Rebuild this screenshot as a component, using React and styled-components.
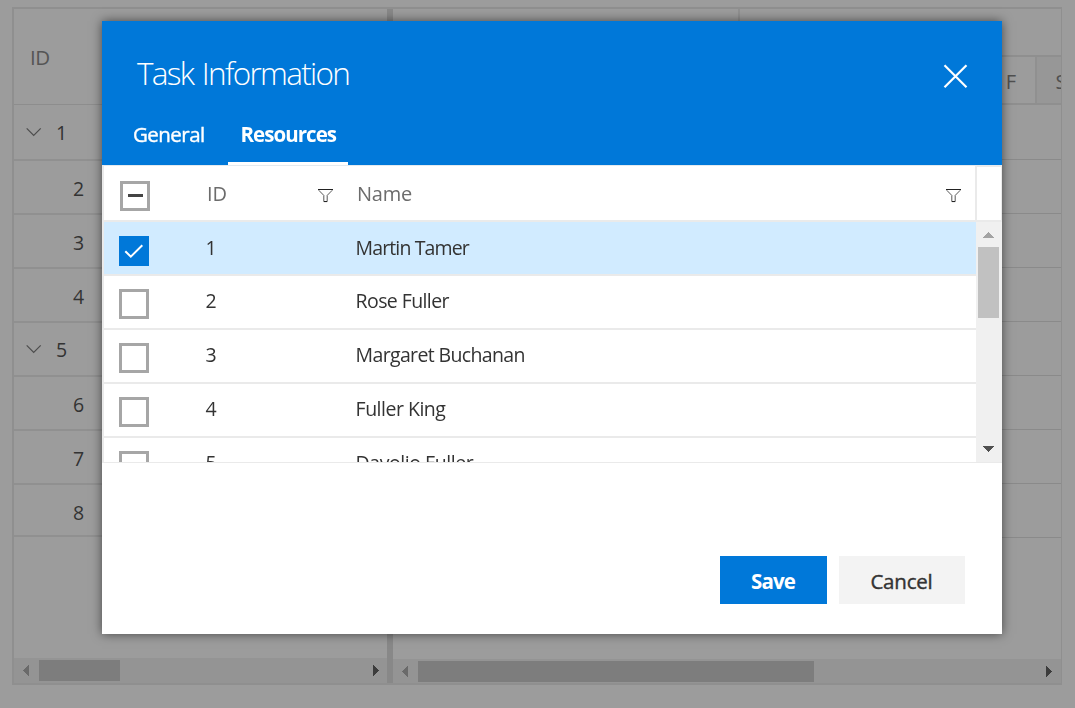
import React from "react";
import styled, { createGlobalStyle } from "styled-components";

const Global = createGlobalStyle`
  * { box-sizing: border-box; }
  body {
    margin: 0;
    background: #9c9c9c;
    font-family: "Segoe UI", "Open Sans", "Noto Sans", sans-serif;
    font-size: 19.5px;
    color: #333;
    overflow: hidden;
  }
`;

const Page = styled.div`
  width: 1075px;
  height: 708px;
  padding: 7px 13px 23px 12px;
  overflow: hidden;
`;

const Gantt = styled.div`
  display: flex;
  height: 678px;
  border: 2px solid #8f8f8f;
  border-right-width: 1px;
`;

const TreePane = styled.div`
  display: flex;
  flex-direction: column;
  width: 373px;
`;

const Splitter = styled.div`
  width: 6px;
  background: #888;
`;

const ChartPane = styled.div`
  display: flex;
  flex-direction: column;
  flex: 1;
  min-width: 0;
`;

const TreeHeader = styled.div`
  height: 96px;
  padding: 33px 0 0 16px;
  line-height: 30px;
  font-size: 20.5px;
  letter-spacing: -0.4px;
  color: #555;
  border-bottom: 1px solid #8d8d8d;
`;

const TreeRow = styled.div`
  display: flex;
  height: ${(p) => p.$height}px;
  padding: ${(p) => p.$top}px 0 0 ${(p) => (p.$parent ? 12 : 59)}px;
  line-height: 30px;
  border-bottom: 2px solid #909090;
`;

const Chevron = styled.svg`
  width: 16px;
  height: 10px;
  margin: 9px 14px 0 0;
  fill: none;
  stroke: #4d4d4d;
  stroke-width: 1.2;
`;

const Spacer = styled.div`
  flex: 1;
`;

const HScroll = styled.div`
  display: flex;
  align-items: flex-start;
  height: ${(p) => p.$height}px;
  padding: 2px ${(p) => p.$right}px 0 9px;
  background: #949494;
`;

const HThumb = styled.div`
  width: ${(p) => p.$width}px;
  height: 21px;
  margin-left: 10px;
  background: #7d7d7d;
`;

const Arrow = styled.svg`
  flex: none;
  width: ${(p) => p.$w}px;
  height: ${(p) => p.$h}px;
  margin-top: ${(p) => p.$mt || 0}px;
  fill: ${(p) => p.$color};
  shape-rendering: crispEdges;
`;

const WeekRow = styled.div`
  display: flex;
  height: 48px;
  border-bottom: 2px solid #8f8f8f;
`;

const Week = styled.div`
  width: ${(p) => p.$width}px;
  border-right: 2px solid #909090;
`;

const DayRow = styled.div`
  display: flex;
  height: 48px;
  padding-left: 294px;
  border-bottom: 2px solid #8f8f8f;
  overflow: hidden;
`;

const Day = styled.div`
  flex: none;
  width: 50px;
  border-right: 2px solid #909090;
  background: ${(p) => (p.$weekend ? "#979797" : "transparent")};
  text-align: center;
  line-height: 49px;
  font-size: 20px;
  color: #505050;
`;

const ChartRow = styled.div`
  height: ${(p) => p.$height}px;
  border-bottom: 1px solid #8a8a8a;
`;

const Overlay = styled.div`
  position: fixed;
  inset: 0;
  padding: 21px 0 0 102px;
`;

const Dialog = styled.div`
  display: flex;
  flex-direction: column;
  width: 900px;
  height: 613px;
  background: #fff;
  box-shadow: 0 0 10px rgba(0, 0, 0, 0.55);
`;

const DialogHeader = styled.header`
  display: flex;
  flex-direction: column;
  justify-content: space-between;
  height: 144px;
  background: #0078d9;
  color: #fff;
`;

const TitleBar = styled.div`
  display: flex;
  justify-content: space-between;
  padding: 30px 34px 0 35px;
`;

const Title = styled.h1`
  margin: 0;
  font-size: 31.5px;
  font-weight: 300;
  line-height: 44px;
  letter-spacing: -1.7px;
  word-spacing: 2px;
`;

const CloseIcon = styled.svg`
  width: 25px;
  height: 25px;
  margin-top: 13px;
  stroke: #fff;
  stroke-width: 2.2;
`;

const Tabs = styled.nav`
  display: flex;
  padding-left: 20px;
`;

const Tab = styled.div`
  width: ${(p) => (p.$active ? 120 : 106)}px;
  height: 49px;
  padding: 2px 0 0 ${(p) => (p.$active ? 12.5 : 11)}px;
  line-height: 32px;
  font-size: 20.5px;
  font-weight: ${(p) => (p.$active ? 700 : 400)};
  letter-spacing: ${(p) => (p.$active ? -0.95 : -0.55)}px;
  -webkit-text-stroke: ${(p) => (p.$active ? 0 : 0.4)}px currentColor;
  border-bottom: 3px solid ${(p) => (p.$active ? "#fff" : "transparent")};
`;

const Grid = styled.section`
  display: flex;
  flex-direction: column;
  height: 298px;
  border-left: 2px solid #eaeaea;
  border-bottom: 1px solid #eaeaea;
`;

const GridHeader = styled.div`
  display: flex;
  height: 57px;
  border-top: 1px solid #e4eaef;
  border-bottom: 2px solid #eaeaea;
  font-size: 20px;
  color: #6c6c6c;
`;

const CheckHead = styled.div`
  width: 103px;
  padding: 15px 0 0 16px;
`;

const ColumnHead = styled.div`
  display: flex;
  justify-content: space-between;
  width: ${(p) => p.$width}px;
  padding: 14px ${(p) => p.$right}px 0 0;
  line-height: 28px;
  letter-spacing: ${(p) => p.$spacing}px;
`;

const HeadText = styled.span`
  margin-left: ${(p) => p.$shift || 0}px;
`;

const HeadGutter = styled.div`
  flex: 1;
  border: solid #eaeaea;
  border-width: 1px 1px 0 2px;
`;

const FilterIcon = styled.svg`
  width: 15px;
  height: 14px;
  margin-top: 9px;
  fill: none;
  stroke: #444;
  stroke-width: 1;
`;

const GridBody = styled.div`
  display: flex;
  height: 240px;
`;

const Rows = styled.div`
  width: 872px;
  overflow: hidden;
`;

const Row = styled.div`
  display: flex;
  height: 54px;
  padding: ${(p) => (p.$selected ? 14 : 13)}px 0 0 15px;
  background: ${(p) => (p.$selected ? "#d1ebff" : "#fff")};
  border-bottom: 2px solid #eaeaea;
  line-height: 24px;
`;

const CheckBox = styled.span`
  display: flex;
  flex: none;
  align-items: center;
  justify-content: center;
  width: 30px;
  height: 30px;
  background: ${(p) => (p.$checked ? "#0078d9" : "#fff")};
  border: 3px solid ${(p) => (p.$checked ? "#0078d9" : "#a6a6a6")};
`;

const Dash = styled.span`
  width: 15px;
  height: 3px;
  margin-bottom: 1px;
  background: #444;
`;

const Tick = styled.svg`
  flex: none;
  width: 20px;
  height: 16px;
  fill: none;
  stroke: #fff;
  stroke-width: 2;
`;

const IdCell = styled.span`
  width: 150px;
  margin-left: 56.6px;
`;

const NameCell = styled.span`
  letter-spacing: ${(p) => p.$spacing}px;
`;

const VScroll = styled.div`
  display: flex;
  flex-direction: column;
  align-items: center;
  flex: 1;
  padding: 10px 1px 10px 0;
  background: #f0f0f0;
`;

const VThumb = styled.div`
  width: 21px;
  height: 71px;
  margin-top: 9px;
  background: #c1c1c1;
`;

const Footer = styled.footer`
  display: flex;
  justify-content: flex-end;
  gap: 12px;
  padding: 93px 37px 0 0;
`;

const Button = styled.button`
  width: ${(p) => (p.$primary ? 107 : 126)}px;
  height: 48px;
  padding: 1px 1px 0 0;
  border: 0;
  font-family: inherit;
  font-size: 20.5px;
  line-height: 30px;
  font-weight: ${(p) => (p.$primary ? 700 : 400)};
  letter-spacing: ${(p) => (p.$primary ? -0.9 : -0.2)}px;
  -webkit-text-stroke: ${(p) => (p.$primary ? 0 : 0.4)}px currentColor;
  color: ${(p) => (p.$primary ? "#fff" : "#333")};
  background: ${(p) => (p.$primary ? "#0078d9" : "#f3f3f3")};
`;

const tasks = [
  { id: 1, parent: true, height: 56, top: 13 },
  { id: 2, height: 54, top: 13 },
  { id: 3, height: 54, top: 13 },
  { id: 4, height: 54, top: 13 },
  { id: 5, parent: true, height: 54, top: 12 },
  { id: 6, height: 54, top: 13 },
  { id: 7, height: 54, top: 13 },
  { id: 8, height: 52, top: 13 },
];

const resources = [
  { id: 1, name: "Martin Tamer", selected: true, spacing: -0.88 },
  { id: 2, name: "Rose Fuller", spacing: -0.6 },
  { id: 3, name: "Margaret Buchanan", spacing: -0.65 },
  { id: 4, name: "Fuller King", spacing: -0.5 },
  { id: 5, name: "Davolio Fuller", spacing: -0.45 },
];

const arrows = {
  left: "M6 0V11L0 5.5Z",
  right: "M0 0V11L6 5.5Z",
  up: "M0 6H11L5.5 0Z",
  down: "M0 0H11L5.5 6Z",
};

function ScrollArrow({ dir, color, mt }) {
  const side = dir === "left" || dir === "right";
  return (
    <Arrow $w={side ? 6 : 11} $h={side ? 11 : 6} $mt={mt} $color={color}>
      <path d={arrows[dir]} />
    </Arrow>
  );
}

function Filter() {
  return (
    <FilterIcon viewBox="0 0 15 14">
      <path d="M0.7 1.2L5.8 6.4V12.6H9.2V6.4L14.3 1.2" strokeWidth="0.9" />
      <path d="M0 0.5H15M6 12.5H9" stroke="#222" />
    </FilterIcon>
  );
}

export default function App() {
  return (
    <>
      <Global />
      <Page>
        <Gantt>
          <TreePane>
            <TreeHeader>ID</TreeHeader>
            {tasks.map((t) => (
              <TreeRow key={t.id} $height={t.height} $top={t.top} $parent={t.parent}>
                {t.parent && (
                  <Chevron viewBox="0 0 16 10">
                    <path d="M0.7 1.3L7.7 8.4L14.7 1.3" />
                  </Chevron>
                )}
                {t.id}
              </TreeRow>
            ))}
            <Spacer />
            <HScroll $height={25} $right={8}>
              <ScrollArrow dir="left" color="#6a6a6a" mt={5} />
              <HThumb $width={81} />
              <Spacer />
              <ScrollArrow dir="right" color="#3c3c3c" mt={5} />
            </HScroll>
          </TreePane>
          <Splitter />
          <ChartPane>
            <WeekRow>
              <Week $width={347} />
            </WeekRow>
            <DayRow>
              <Day />
              <Day />
              <Day />
              <Day />
              <Day />
              <Day />
              <Day>F</Day>
              <Day $weekend>S</Day>
            </DayRow>
            {tasks.map((t) => (
              <ChartRow key={t.id} $height={t.id === 1 ? 55 : 54} />
            ))}
            <Spacer />
            <HScroll $height={24} $right={9}>
              <ScrollArrow dir="left" color="#6a6a6a" mt={5} />
              <HThumb $width={396} />
              <Spacer />
              <ScrollArrow dir="right" color="#3c3c3c" mt={5} />
            </HScroll>
          </ChartPane>
        </Gantt>
      </Page>

      <Overlay>
        <Dialog>
          <DialogHeader>
            <TitleBar>
              <Title>Task Information</Title>
              <CloseIcon viewBox="0 0 25 25">
                <path d="M1.5 1.2L23.5 23.2M23.5 1.2L1.5 23.2" />
              </CloseIcon>
            </TitleBar>
            <Tabs>
              <Tab>General</Tab>
              <Tab $active>Resources</Tab>
            </Tabs>
          </DialogHeader>

          <Grid>
            <GridHeader>
              <CheckHead>
                <CheckBox>
                  <Dash />
                </CheckBox>
              </CheckHead>
              <ColumnHead $width={151} $right={25} $spacing={-0.2}>
                <HeadText>ID</HeadText>
                <Filter />
              </ColumnHead>
              <ColumnHead $width={617} $right={14} $spacing={-0.2}>
                <HeadText $shift={-1}>Name</HeadText>
                <Filter />
              </ColumnHead>
              <HeadGutter />
            </GridHeader>
            <GridBody>
              <Rows>
                {resources.map((r) => (
                  <Row key={r.id} $selected={r.selected}>
                    <CheckBox $checked={r.selected}>
                      {r.selected && (
                        <Tick viewBox="0 0 20 16">
                          <path d="M1.3 8.2L6.8 13.7L18.3 2.2" />
                        </Tick>
                      )}
                    </CheckBox>
                    <IdCell>{r.id}</IdCell>
                    <NameCell $spacing={r.spacing}>{r.name}</NameCell>
                  </Row>
                ))}
              </Rows>
              <VScroll>
                <ScrollArrow dir="up" color="#a3a3a3" />
                <VThumb />
                <Spacer />
                <ScrollArrow dir="down" color="#505050" />
              </VScroll>
            </GridBody>
          </Grid>

          <Footer>
            <Button $primary>Save</Button>
            <Button>Cancel</Button>
          </Footer>
        </Dialog>
      </Overlay>
    </>
  );
}
